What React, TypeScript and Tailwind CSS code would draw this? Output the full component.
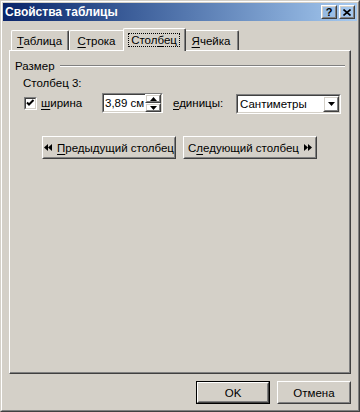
import type { ReactNode } from 'react'

function Raised({ className = '', children }: { className?: string; children?: ReactNode }) {
    return (
        <div className={`border border-t-white border-l-white border-r-[#404040] border-b-[#404040] ${className}`}>
            <div className="w-full h-full border border-t-[#d4d0c8] border-l-[#d4d0c8] border-r-[#808080] border-b-[#808080] flex items-center justify-center">
                {children}
            </div>
        </div>
    )
}

function Sunken({ className = '', children }: { className?: string; children?: ReactNode }) {
    return (
        <div className={`border border-t-[#808080] border-l-[#808080] border-r-white border-b-white ${className}`}>
            <div className="w-full h-full border border-t-[#404040] border-l-[#404040] border-r-[#d4d0c8] border-b-[#d4d0c8] bg-white flex items-center">
                {children}
            </div>
        </div>
    )
}

function U({ children }: { children: ReactNode }) {
    return <span className="underline underline-offset-[2px] decoration-1">{children}</span>
}

function Tab({ width, children }: { width: string; children: ReactNode }) {
    return (
        <div className={`${width} h-[20px] border-t border-l border-r border-t-white border-l-white border-r-[#404040] rounded-tl-[2px] rounded-tr-[2px]`}>
            <div className="h-full border-r border-r-[#808080] flex items-center justify-center pt-[1px]">
                {children}
            </div>
        </div>
    )
}

function Arrows({ dir }: { dir: 'left' | 'right' }) {
    return (
        <svg width="8" height="7" viewBox="0 0 8 7" className="shrink-0">
            {dir === 'left' ? (
                <>
                    <polygon points="0,3.5 4,0 4,7" fill="black" />
                    <polygon points="4,3.5 8,0 8,7" fill="black" />
                </>
            ) : (
                <>
                    <polygon points="0,0 4,3.5 0,7" fill="black" />
                    <polygon points="4,0 8,3.5 4,7" fill="black" />
                </>
            )}
        </svg>
    )
}

function Tri({ dir }: { dir: 'up' | 'down' }) {
    return (
        <svg width="7" height="4" viewBox="0 0 7 4">
            {dir === 'up' ? <polygon points="0,4 3.5,0 7,4" fill="black" /> : <polygon points="0,0 7,0 3.5,4" fill="black" />}
        </svg>
    )
}

export default function App() {
    return (
        <div className="w-[360px] h-[412px] bg-[#d4d0c8] font-['Liberation_Sans',Arial,sans-serif] text-[11.5px] leading-[14px] text-black select-none whitespace-nowrap">
            <div className="h-full border border-t-[#d4d0c8] border-l-[#d4d0c8] border-r-[#404040] border-b-[#404040]">
                <div className="h-full border border-t-white border-l-white border-r-[#808080] border-b-[#808080] p-px flex flex-col">
                    {/* Title bar */}
                    <div className="h-[18px] flex items-center bg-linear-to-r from-[#0a246a] to-[#a6caf0] pl-[2px] pr-[2px]">
                        <span className="flex-1 text-white font-bold text-[12px]">Свойства таблицы</span>
                        <Raised className="w-[16px] h-[14px]">
                            <span className="font-bold text-[11px] leading-[10px]">?</span>
                        </Raised>
                        <Raised className="w-[16px] h-[14px] ml-[2px]">
                            <svg width="8" height="7" viewBox="0 0 8 7">
                                <path d="M0.5 0.5 L7.5 6.5 M7.5 0.5 L0.5 6.5" stroke="black" strokeWidth="1.6" />
                            </svg>
                        </Raised>
                    </div>

                    <div className="px-[6px] flex flex-col">
                        {/* Tabs */}
                        <div className="mt-[7px] h-[22px] flex items-end pl-[2px]">
                            <Tab width="w-[58px]"><span><U>Т</U>аблица</span></Tab>
                            <Tab width="w-[56px]"><span><U>С</U>трока</span></Tab>
                            <div className="relative z-10 -mx-[2px] -mb-px w-[63px] h-[23px] bg-[#d4d0c8] border-t border-l border-r border-t-white border-l-white border-r-[#404040] rounded-tl-[2px] rounded-tr-[2px]">
                                <div className="h-full border-r border-r-[#808080] flex items-start justify-center pt-[4px]">
                                    <span className="border border-dotted border-black px-[2px] leading-[12px]">Стол<U>б</U>ец</span>
                                </div>
                            </div>
                            <Tab width="w-[55px]"><span><U>Я</U>чейка</span></Tab>
                        </div>

                        {/* Panel */}
                        <div className="h-[324px] border border-t-white border-l-white border-r-[#404040] border-b-[#404040]">
                            <div className="h-full border-r border-b border-r-[#808080] border-b-[#808080] flex flex-col">
                                {/* Group label */}
                                <div className="mt-[8px] flex items-center pl-[5px] pr-[4px]">
                                    <span>Размер</span>
                                    <div className="flex-1 ml-[5px] border-t border-b border-t-[#808080] border-b-white" />
                                </div>

                                <div className="mt-[3px] pl-[13px]">Столбец 3:</div>

                                <div className="mt-[3px] h-[20px] flex items-center pl-[14px]">
                                    <Sunken className="w-[13px] h-[13px] shrink-0">
                                        <svg width="9" height="9" viewBox="0 0 9 9">
                                            <path d="M1 3.5 L3 5.5 L7.5 1" stroke="black" strokeWidth="2" fill="none" />
                                        </svg>
                                    </Sunken>
                                    <span className="ml-[4px] w-[61px] shrink-0"><U>ш</U>ирина</span>
                                    <Sunken className="w-[61px] h-[20px] shrink-0">
                                        <span className="flex-1 pl-[1px] overflow-hidden">3,89 см</span>
                                        <div className="flex flex-col">
                                            <Raised className="w-[16px] h-[9px]"><Tri dir="up" /></Raised>
                                            <Raised className="w-[16px] h-[9px]"><Tri dir="down" /></Raised>
                                        </div>
                                    </Sunken>
                                    <span className="ml-[10px] w-[63px] shrink-0"><U>е</U>диницы:</span>
                                    <Sunken className="w-[105px] h-[20px] mt-[2px] shrink-0">
                                        <span className="flex-1 pl-[2px]">Сантиметры</span>
                                        <Raised className="w-[16px] h-[16px]"><Tri dir="down" /></Raised>
                                    </Sunken>
                                </div>

                                <div className="mt-[23px] flex justify-center gap-[7px]">
                                    <Raised className="w-[134px] h-[23px]">
                                        <div className="flex items-center gap-[5px]">
                                            <Arrows dir="left" />
                                            <span><U>П</U>редыдущий столбец</span>
                                        </div>
                                    </Raised>
                                    <Raised className="w-[134px] h-[23px]">
                                        <div className="flex items-center gap-[5px]">
                                            <span>С<U>л</U>едующий столбец</span>
                                            <Arrows dir="right" />
                                        </div>
                                    </Raised>
                                </div>
                            </div>
                        </div>

                        {/* Bottom buttons */}
                        <div className="mt-[7px] flex justify-end gap-[7px]">
                            <div className="w-[74px] h-[23px] border border-black">
                                <Raised className="w-full h-full">OK</Raised>
                            </div>
                            <Raised className="w-[74px] h-[23px]">Отмена</Raised>
                        </div>
                    </div>
                </div>
            </div>
        </div>
    )
}
